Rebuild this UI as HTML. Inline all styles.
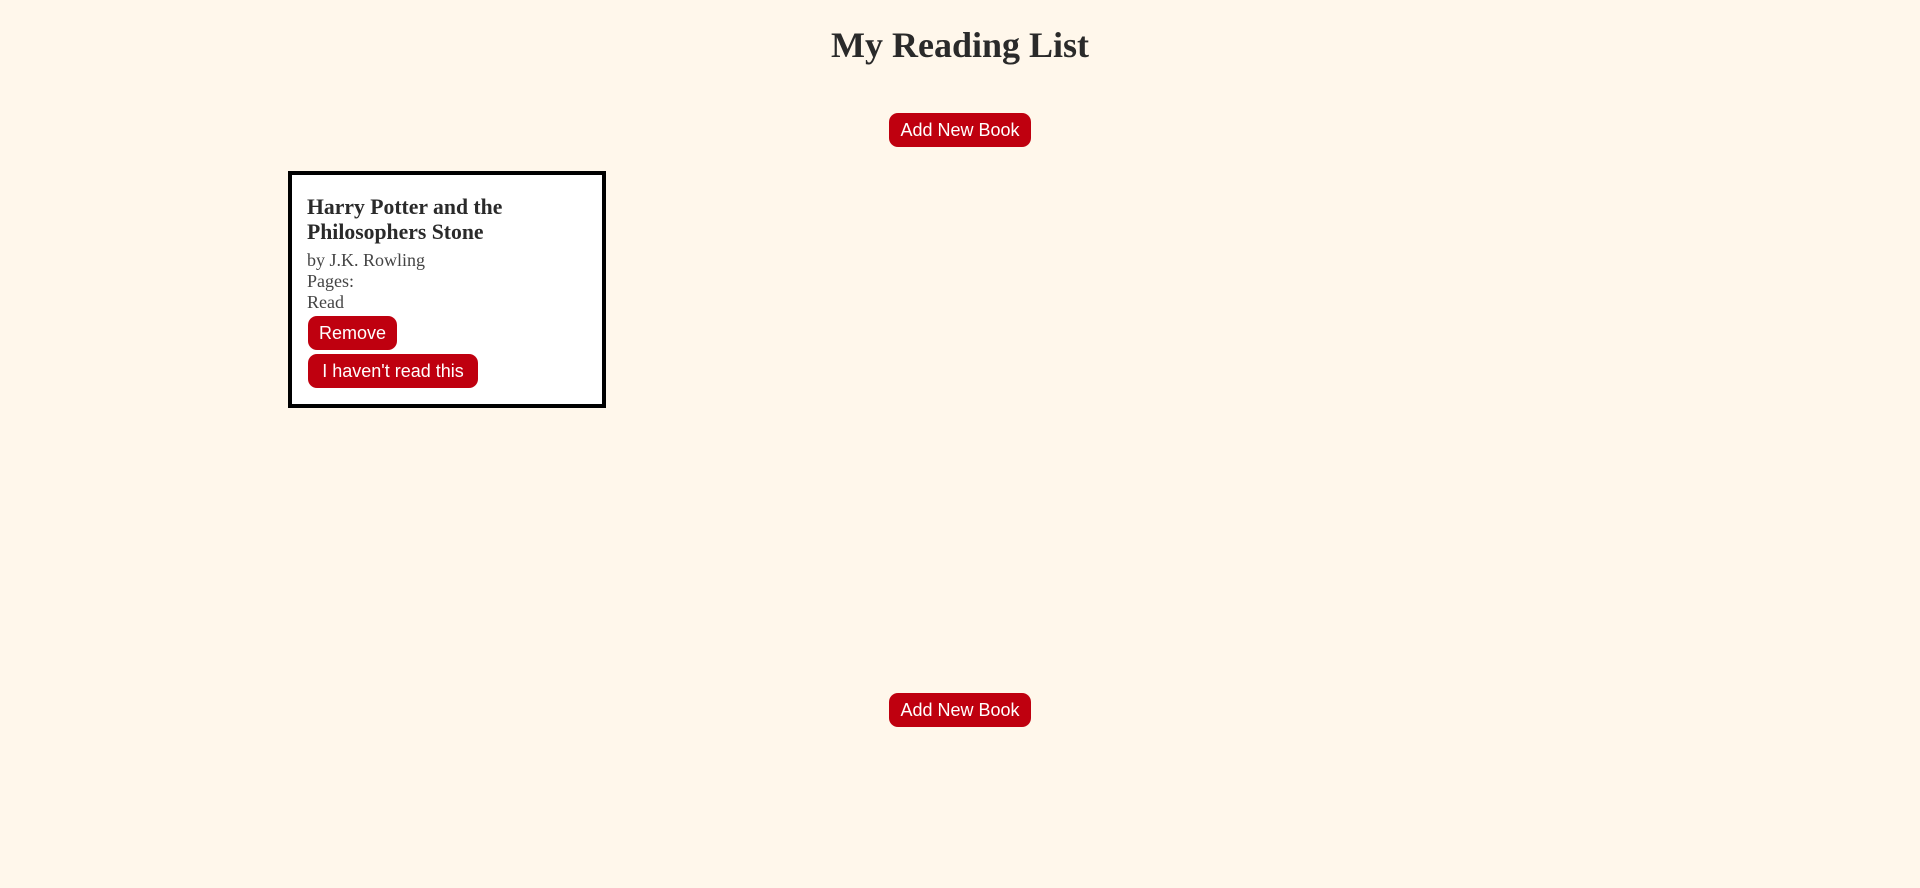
<!DOCTYPE html>
<html><head><meta charset="utf-8"><style>
html,body{margin:0;padding:0;}
body{width:1920px;height:888px;background:#fff7eb;position:relative;overflow:hidden;font-family:"Liberation Serif",serif;color:#2a2a2a;}
h1{position:absolute;top:25px;left:0;width:1920px;margin:0;text-align:center;font-size:36px;line-height:40px;font-weight:bold;}
.btn{position:absolute;background:#bf000f;color:#fff;border-radius:9px;font-family:"Liberation Sans",sans-serif;font-size:18px;height:34px;line-height:34px;text-align:center;}
.card{position:absolute;left:288px;top:171px;width:310px;height:229px;border:4px solid #000;background:#fff;}
.t{position:absolute;left:15px;top:20px;font-size:21.7px;line-height:25px;font-weight:bold;margin:0;}
.b{position:absolute;left:15px;top:75px;font-size:18px;line-height:21px;color:#444;}
</style></head><body>
<h1>My Reading List</h1>
<div class="btn" style="left:889px;top:113px;width:142px;">Add New Book</div>
<div class="card">
<div class="t">Harry Potter and the<br>Philosophers Stone</div>
<div class="b">by J.K. Rowling<br>Pages:<br>Read</div>
<div class="btn" style="left:16px;top:141px;width:89px;">Remove</div>
<div class="btn" style="left:16px;top:179px;width:170px;">I haven't read this</div>
</div>
<div class="btn" style="left:889px;top:693px;width:142px;">Add New Book</div>
</body></html>
